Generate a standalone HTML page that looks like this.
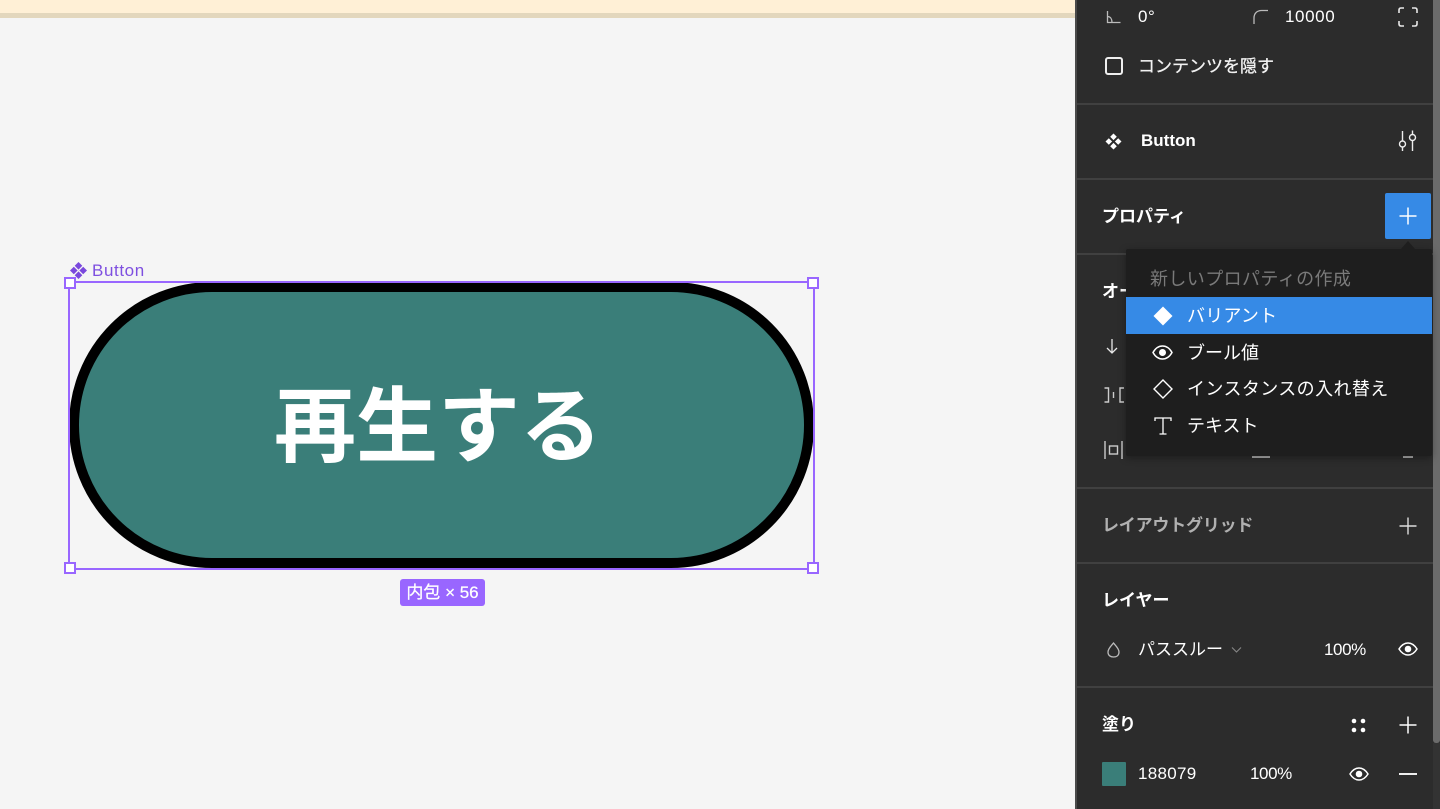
<!DOCTYPE html>
<html lang="ja">
<head>
<meta charset="utf-8">
<title>Button</title>
<style>
html,body{margin:0;padding:0;width:1440px;height:809px;overflow:hidden;background:#f5f5f5;}
body{position:relative;font-family:"Liberation Sans","Noto Sans CJK JP",sans-serif;}
.a{position:absolute;white-space:nowrap;}
.t{position:absolute;white-space:nowrap;color:#fff;font-size:17px;line-height:24px;height:24px;}
.m{font-size:18px;letter-spacing:.4px;}
.b{font-weight:700;}
.hr{position:absolute;left:1077px;width:356px;height:2px;background:#404040;}
svg{position:absolute;overflow:visible;}
.h{position:absolute;width:8px;height:8px;background:#fff;border:2px solid #9966ff;}
</style>
</head>
<body>
<!-- top banner -->
<div class="a" style="left:0;top:0;width:1076px;height:13px;background:#fff0d6"></div>
<div class="a" style="left:0;top:13px;width:1076px;height:5px;background:#e3d7bd"></div>

<!-- canvas button -->
<div class="a" style="left:69px;top:282px;width:745px;height:286px;box-sizing:border-box;border:10px solid #000;border-radius:143px;background:#3a7e79"></div>
<div class="a" style="left:68px;top:281px;width:747px;height:289px;box-sizing:border-box;border:2px solid #9966ff"></div>
<div class="h" style="left:64px;top:277px"></div>
<div class="h" style="left:807px;top:277px"></div>
<div class="h" style="left:64px;top:562px"></div>
<div class="h" style="left:807px;top:562px"></div>
<div class="a b" style="left:274px;top:373px;color:#fff;font-size:82px;line-height:110px">再生する</div>

<svg style="left:70px;top:262px" width="18" height="18" viewBox="0 0 18 18" fill="#7a48dd">
<path d="M8.500 0L12.300 3.800 8.500 7.600 4.700 3.800Z M3.800 4.700L7.600 8.500 3.800 12.300 0 8.500Z M13.200 4.700L17 8.500 13.200 12.300 9.400 8.500Z M8.500 9.400L12.300 13.200 8.500 17 4.700 13.200Z"/>
</svg>
<div class="t" style="left:92px;top:259px;color:#7e4fe0;font-size:17px;letter-spacing:.6px">Button</div>

<div class="a" style="left:400px;top:579px;width:85px;height:27px;border-radius:3px;background:#9966ff;color:#fff;font-size:17px;line-height:28px;text-align:center;-webkit-text-stroke:.25px #fff">内包 × 56</div>

<!-- right panel -->
<div class="a" style="left:1075px;top:0;width:2px;height:809px;background:#4a4a4a"></div>
<div class="a" style="left:1077px;top:0;width:363px;height:809px;background:#2c2c2c"></div>
<div class="a" style="left:1433px;top:0;width:7px;height:743px;background:#6b6b6b;border-radius:0 0 3px 3px"></div>
<div class="a" style="left:1433px;top:743px;width:7px;height:66px;background:#333"></div>

<div class="hr" style="top:103px"></div>
<div class="hr" style="top:178px"></div>
<div class="hr" style="top:253px"></div>
<div class="hr" style="top:487px"></div>
<div class="hr" style="top:562px"></div>
<div class="hr" style="top:686px"></div>

<!-- row 0 -->
<svg style="left:1106px;top:10px" width="16" height="14" viewBox="0 0 16 14" fill="none" stroke="#bbb" stroke-width="1.300">
<path d="M1.500 1V12.500H14.500 M1.500 6.500C4.500 6.500 6 9 6 12.500"/>
</svg>
<div class="t" style="left:1138px;top:5px;letter-spacing:.6px">0°</div>
<svg style="left:1253px;top:9px" width="16" height="16" viewBox="0 0 16 16" fill="none" stroke="#bbb" stroke-width="1.300">
<path d="M1 15V9C1 4.500 4 1.500 8.500 1.500H15"/>
</svg>
<div class="t" style="left:1285px;top:5px;letter-spacing:.6px">10000</div>
<svg style="left:1398px;top:7px" width="20" height="20" viewBox="0 0 20 20" fill="none" stroke="#e8e8e8" stroke-width="1.600">
<path d="M1 6V3Q1 1 3 1H6 M14 1H17Q19 1 19 3V6 M19 14V17Q19 19 17 19H14 M6 19H3Q1 19 1 17V14"/>
</svg>

<!-- hide content -->
<div class="a" style="left:1105px;top:57px;width:18px;height:18px;box-sizing:border-box;border:2px solid #eee;border-radius:3px"></div>
<div class="t" style="left:1138px;top:55px;color:#f2f2f2;-webkit-text-stroke:.3px #f2f2f2">コンテンツを隠す</div>

<!-- Button component -->
<svg style="left:1105px;top:133px" width="18" height="18" viewBox="0 0 18 18" fill="#fff">
<path d="M8.500 0.500L11.800 3.800 8.500 7.100 5.200 3.800Z M3.800 5.200L7.100 8.500 3.800 11.800 0.500 8.500Z M13.200 5.200L16.500 8.500 13.200 11.800 9.900 8.500Z M8.500 9.900L11.800 13.200 8.500 16.500 5.200 13.200Z"/>
</svg>
<div class="t b" style="left:1141px;top:129px">Button</div>
<svg style="left:1398px;top:130px" width="20" height="22" viewBox="0 0 20 22" fill="none" stroke="#eee" stroke-width="1.400">
<path d="M4.500 1V11 M4.500 17V21 M14.500 0.500V4.500 M14.500 10.500V21"/>
<circle cx="4.500" cy="14" r="3"/><circle cx="14.500" cy="7.500" r="3"/>
</svg>

<!-- properties -->
<div class="t b" style="left:1102px;top:205px">プロパティ</div>
<div class="a" style="left:1385px;top:193px;width:46px;height:46px;background:#368ae6;border-radius:2px"></div>
<svg style="left:1399px;top:207px" width="18" height="18" viewBox="0 0 18 18" stroke="#fff" stroke-width="1.500"><path d="M0.500 9H17.500M9 0.500V17.500"/></svg>

<!-- auto layout (behind menu) -->
<div class="t b" style="left:1102px;top:280px">オート</div>
<svg style="left:1105px;top:337px" width="14" height="18" viewBox="0 0 14 18" fill="none" stroke="#e8e8e8" stroke-width="1.300"><path d="M7 2V16 M2 11L7 16 12 11"/></svg>
<svg style="left:1104px;top:386px" width="22" height="18" viewBox="0 0 22 18" fill="none" stroke="#ccc" stroke-width="1.400"><path d="M0.500 2H4.500V16H0.500 M9.500 6V12 M20 2H16V16H20"/></svg>
<svg style="left:1104px;top:441px" width="20" height="18" viewBox="0 0 20 18" fill="none" stroke="#ccc" stroke-width="1.400"><path d="M1 0V18 M18 0V18"/><rect x="5.500" y="5" width="8" height="8"/></svg>
<div class="a" style="left:1252px;top:456px;width:18px;height:2px;background:#aaa"></div>
<div class="a" style="left:1403px;top:456px;width:10px;height:2px;background:#aaa"></div>

<!-- dropdown -->
<div class="a" style="left:1126px;top:249px;width:306px;height:207px;background:#1e1e1e;border-radius:2px;box-shadow:0 2px 8px rgba(0,0,0,.35)"></div>
<div class="a" style="left:1401px;top:241px;width:0;height:0;border-left:7px solid transparent;border-right:7px solid transparent;border-bottom:8px solid #1e1e1e"></div>
<div class="t m" style="left:1150px;top:267px;color:#7a7a7a">新しいプロパティの作成</div>
<div class="a" style="left:1126px;top:297px;width:306px;height:37px;background:#368ae6"></div>
<svg style="left:1153px;top:306px" width="20" height="20" viewBox="0 0 20 20" fill="#fff"><path d="M10 0.500L19.500 10 10 19.500 0.500 10Z"/></svg>
<div class="t m" style="left:1187px;top:304px;letter-spacing:.2px">バリアント</div>
<svg style="left:1152px;top:345px" width="21" height="15" viewBox="0 0 21 15" fill="none" stroke="#fff" stroke-width="1.500"><path d="M1 7.500C3.500 3 7 1 10.500 1S17.500 3 20 7.500C17.500 12 14 14 10.500 14S3.500 12 1 7.500Z"/><circle cx="10.500" cy="7.500" r="3.500" fill="#fff" stroke="none"/></svg>
<div class="t m" style="left:1187px;top:341px;letter-spacing:0">ブール値</div>
<svg style="left:1153px;top:379px" width="20" height="20" viewBox="0 0 20 20" fill="none" stroke="#fff" stroke-width="1.400"><path d="M10 1L19 10 10 19 1 10Z"/></svg>
<div class="t m" style="left:1187px;top:377px">インスタンスの入れ替え</div>
<svg style="left:1154px;top:417px" width="18" height="18" viewBox="0 0 18 18" fill="none" stroke="#fff" stroke-width="1.300"><path d="M1 4V1H17V4 M9 1V17 M5.500 17H12.500"/></svg>
<div class="t m" style="left:1187px;top:414px;letter-spacing:0">テキスト</div>

<!-- layout grid -->
<div class="t b" style="left:1102px;top:514px;color:#b0b0b0;letter-spacing:-.2px">レイアウトグリッド</div>
<svg style="left:1399px;top:517px" width="18" height="18" viewBox="0 0 18 18" stroke="#ddd" stroke-width="1.400"><path d="M0.500 9H17.500M9 0.500V17.500"/></svg>

<!-- layer -->
<div class="t b" style="left:1102px;top:589px">レイヤー</div>
<svg style="left:1107px;top:642px" width="13" height="16" viewBox="0 0 13 16" fill="none" stroke="#bbb" stroke-width="1.300"><path d="M6.500 1C8.500 3.500 12 6.500 12 10S9.500 15 6.500 15 1 13.500 1 10 4.500 3.500 6.500 1Z"/></svg>
<div class="t" style="left:1138px;top:638px">パススルー</div>
<svg style="left:1231px;top:646px" width="11" height="8" viewBox="0 0 11 8" fill="none" stroke="#888" stroke-width="1.100"><path d="M1 1.500L5.500 6 10 1.500"/></svg>
<div class="t" style="left:1324px;top:638px;letter-spacing:-.4px">100%</div>
<svg style="left:1398px;top:642px" width="20" height="14" viewBox="0 0 20 14" fill="none" stroke="#fff" stroke-width="1.500"><path d="M1 7C3.500 3 6.500 1 10 1S16.500 3 19 7C16.500 11 13.500 13 10 13S3.500 11 1 7Z"/><circle cx="10" cy="7" r="3.300" fill="#fff" stroke="none"/></svg>

<!-- fill -->
<div class="t b" style="left:1102px;top:713px">塗り</div>
<svg style="left:1351px;top:718px" width="15" height="15" viewBox="0 0 15 15" fill="#fff"><circle cx="3" cy="3" r="2.300"/><circle cx="12" cy="3" r="2.300"/><circle cx="3" cy="12" r="2.300"/><circle cx="12" cy="12" r="2.300"/></svg>
<svg style="left:1399px;top:716px" width="18" height="18" viewBox="0 0 18 18" stroke="#fff" stroke-width="1.500"><path d="M0.500 9H17.500M9 0.500V17.500"/></svg>
<div class="a" style="left:1102px;top:762px;width:24px;height:24px;background:#3a7e79;border-radius:1px"></div>
<div class="t" style="left:1138px;top:762px;letter-spacing:.3px">188079</div>
<div class="t" style="left:1250px;top:762px;letter-spacing:-.4px">100%</div>
<svg style="left:1349px;top:767px" width="20" height="14" viewBox="0 0 20 14" fill="none" stroke="#fff" stroke-width="1.500"><path d="M1 7C3.500 3 6.500 1 10 1S16.500 3 19 7C16.500 11 13.500 13 10 13S3.500 11 1 7Z"/><circle cx="10" cy="7" r="3.300" fill="#fff" stroke="none"/></svg>
<div class="a" style="left:1399px;top:773px;width:18px;height:2px;background:#eee"></div>
</body>
</html>
